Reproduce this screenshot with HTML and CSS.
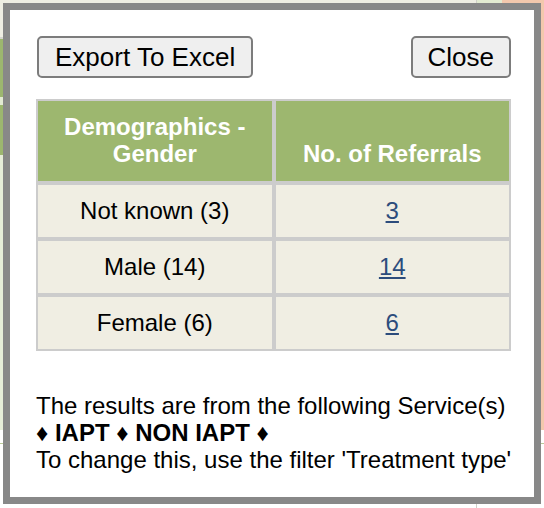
FILE: index.html
```html
<!DOCTYPE html>
<html lang="en">
<head>
<meta charset="utf-8">
<title>Demographics - Gender</title>
<link rel="stylesheet" href="styles.css">
</head>
<body>
<div class="backdrop">
  <div class="bd-main">
    <div class="bd-top"></div>
    <div class="bd-rule"></div>
    <div class="bd-green"></div>
    <div class="bd-pale"></div>
    <div class="bd-green short"></div>
    <div class="bd-light"></div>
    <div class="bd-white"></div>
    <div class="bd-line"></div>
  </div>
  <div class="bd-sep"></div>
  <div class="bd-mid"></div>
  <div class="bd-right">
    <div class="bd-peach"></div>
    <div class="bd-white"></div>
    <div class="bd-line"></div>
  </div>
</div>

<div class="modal">
  <div class="toolbar">
    <button class="btn wide" type="button">Export To Excel</button>
    <button class="btn" type="button">Close</button>
  </div>

  <table class="grid">
    <thead>
      <tr>
        <th>Demographics -<br>Gender</th>
        <th>No. of Referrals</th>
      </tr>
    </thead>
    <tbody>
      <tr>
        <td>Not known (3)</td>
        <td><a href="#">3</a></td>
      </tr>
      <tr>
        <td>Male (14)</td>
        <td><a href="#">14</a></td>
      </tr>
      <tr>
        <td>Female (6)</td>
        <td><a href="#">6</a></td>
      </tr>
    </tbody>
  </table>

  <div class="note">
    <div>The results are from the following Service(s)</div>
    <div class="services">♦ IAPT ♦ NON IAPT ♦</div>
    <div>To change this, use the filter 'Treatment type'</div>
  </div>
</div>
</body>
</html>
```

FILE: styles.css
```css
html, body {
  margin: 0;
  padding: 0;
}

body {
  width: 544px;
  height: 508px;
  overflow: hidden;
  background: #ffffff;
  font-family: "Liberation Sans", Arial, Helvetica, sans-serif;
  position: relative;
}

/* page behind the dialog */
.backdrop {
  display: flex;
  height: 508px;
}

.bd-main {
  width: 476px;
  display: flex;
  flex-direction: column;
}

.bd-top { height: 37px; background: #efeee3; }
.bd-rule { height: 2px; background: #d4d4cc; }
.bd-green { height: 58px; background: #9cb66f; }
.bd-green.short { height: 50px; }
.bd-pale { height: 8px; background: #e2ead2; }
.bd-light { height: 275px; background: #e6edd8; }
.bd-white { height: 13px; background: #ffffff; }
.bd-line { height: 1px; background: #b9c99a; }

.bd-sep { width: 1px; background: #d0d0c8; }
.bd-mid { width: 25px; height: 3px; background: #e3ebd1; }

.bd-right {
  flex: 1;
  display: flex;
  flex-direction: column;
}

.bd-peach { height: 430px; background: #f3c8ad; }

/* dialog */
.modal {
  position: absolute;
  left: 3px;
  top: 3px;
  width: 538px;
  height: 501px;
  box-sizing: border-box;
  border: 7px solid #888888;
  background: #ffffff;
  padding: 26px 23px 0 26px;
}

.toolbar {
  display: flex;
  justify-content: space-between;
  padding: 0 0 0 1px;
}

.btn {
  font-family: "Liberation Sans", Arial, Helvetica, sans-serif;
  font-size: 26px;
  color: #000000;
  height: 42px;
  padding: 0 15px;
  background: #efefef;
  border: 2px solid #7c7c7c;
  border-radius: 5px;
  line-height: 1;
  margin: 0;
}

.btn.wide {
  padding: 0 16px;
}

.grid {
  width: 475px;
  margin-top: 21px;
  border-collapse: separate;
  border-spacing: 0;
  table-layout: fixed;
  font-size: 24px;
}

.grid th,
.grid td {
  border: 2px solid #cccccc;
  text-align: center;
}

.grid th {
  background: #9db76f;
  color: #ffffff;
  font-weight: bold;
  vertical-align: bottom;
  padding: 12px 6px 14px;
  line-height: 27px;
}

.grid td {
  background: #f0eee3;
  color: #000000;
  padding: 12px 6px 13px;
  line-height: 27px;
  vertical-align: middle;
}

.grid a {
  color: #2c4c7c;
  text-decoration: underline;
}

.note {
  margin-top: 41px;
  font-size: 24px;
  line-height: 27px;
  color: #000000;
  white-space: nowrap;
}

.services {
  font-weight: bold;
}
```
